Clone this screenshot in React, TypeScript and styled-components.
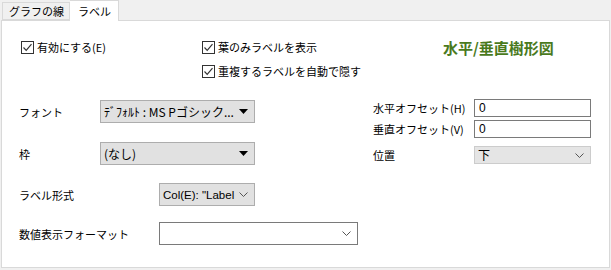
import React from 'react';
import styled, { createGlobalStyle } from 'styled-components';

const Global = createGlobalStyle`
  html, body { margin: 0; padding: 0; background: #f0f0f0; }
  body {
    font-family: "Noto Sans CJK JP", "Noto Sans", sans-serif;
    font-size: 11px;
    color: #000;
  }
`;

const Window = styled.div`
  width: 611px;
  height: 270px;
  display: flex;
  flex-direction: column;
  background: #f0f0f0;
`;

const TabStrip = styled.div`
  display: flex;
  align-items: flex-end;
  height: 20px;
  padding-left: 2px;
  position: relative;
  z-index: 1;
`;

const Tab = styled.div<{ $active?: boolean }>`
  box-sizing: border-box;
  height: ${p => (p.$active ? '21px' : '18px')};
  margin-bottom: ${p => (p.$active ? '-1px' : '0')};
  padding: ${p => (p.$active ? '0 7px 0 8px' : '0 5px 0 6px')};
  background: ${p => (p.$active ? '#fff' : '#f0f0f0')};
  border: 1px solid #d9d9d9;
  border-bottom: ${p => (p.$active ? 'none' : '1px solid #d9d9d9')};
  border-left: ${p => (p.$active ? 'none' : '1px solid #d9d9d9')};
  display: flex;
  align-items: center;
  font-size: 11px;
  line-height: 14px;
  white-space: nowrap;
`;

const Panel = styled.div`
  box-sizing: border-box;
  margin-left: 1px;
  width: 609px;
  height: 248px;
  background: #fff;
  border: 1px solid #d9d9d9;
  display: flex;
  flex-direction: column;
`;

const TopSection = styled.div`
  display: grid;
  grid-template-columns: 181px 241px auto;
  padding: 20px 0 0 19px;
`;

const CheckColumn = styled.div`
  display: flex;
  flex-direction: column;
  gap: 11px;
`;

const CheckRow = styled.label`
  display: flex;
  align-items: center;
  gap: 3px;
  height: 13px;
  line-height: 13px;
  white-space: nowrap;
`;

const Box = styled.span`
  box-sizing: border-box;
  width: 13px;
  height: 13px;
  border: 1px solid #333;
  background: #fff;
  display: flex;
  align-items: center;
  justify-content: center;
  flex: none;
`;

const Title = styled.div`
  font-size: 15px;
  font-weight: bold;
  color: #4a7a1d;
  line-height: 15px;
  margin-top: -1px;
  white-space: nowrap;
`;

const LowerSection = styled.div`
  display: flex;
  padding-left: 17px;
  margin-top: 21px;
`;

const LeftColumn = styled.div`
  width: 354px;
  display: flex;
  flex-direction: column;
`;

const RightColumn = styled.div`
  display: flex;
  flex-direction: column;
`;

const FieldRow = styled.div<{ $top: number }>`
  display: flex;
  align-items: center;
  margin-top: ${p => p.$top}px;
`;

const Label = styled.div<{ $w: number }>`
  width: ${p => p.$w}px;
  flex: none;
  white-space: nowrap;
  line-height: 14px;
`;

const Select = styled.div<{ $w: number; $h: number; $bg: string; $border: string }>`
  box-sizing: border-box;
  width: ${p => p.$w}px;
  height: ${p => p.$h}px;
  background: ${p => p.$bg};
  border: 1px solid ${p => p.$border};
  display: flex;
  align-items: center;
  justify-content: space-between;
  gap: 4px;
  padding: 0 6px 0 3px;
  white-space: nowrap;
  overflow: hidden;
`;

const SelectText = styled.span<{ $font?: string; $size?: number }>`
  font-family: ${p => p.$font || 'inherit'};
  font-size: ${p => p.$size || 11}px;
  line-height: 14px;
`;

const Input = styled.div`
  box-sizing: border-box;
  width: 117px;
  height: 18px;
  border: 1px solid #7a7a7a;
  background: #fff;
  display: flex;
  align-items: center;
  padding-left: 4px;
  font-family: "Liberation Sans Narrow", "Liberation Sans", sans-serif;
  font-size: 12px;
  line-height: 14px;
`;

const Check = () => (
  <Box>
    <svg width="11" height="11" viewBox="0 0 11 11">
      <polyline points="1.5,5.5 4.2,8.3 9.5,2.2" fill="none" stroke="#333" strokeWidth="1.2" />
    </svg>
  </Box>
);

const Triangle = () => (
  <svg width="9" height="5" viewBox="0 0 9 5">
    <polygon points="0,0 9,0 4.5,5" fill="#000" />
  </svg>
);

const Chevron = () => (
  <svg width="9" height="5" viewBox="0 0 9 5">
    <polyline points="0.5,0.5 4.5,4.5 8.5,0.5" fill="none" stroke="#555" strokeWidth="1" />
  </svg>
);

export default function App() {
  return (
    <Window>
      <Global />
      <TabStrip>
        <Tab>グラフの線</Tab>
        <Tab $active>ラベル</Tab>
      </TabStrip>
      <Panel>
        <TopSection>
          <CheckColumn>
            <CheckRow><Check />有効にする(E)</CheckRow>
          </CheckColumn>
          <CheckColumn>
            <CheckRow><Check />葉のみラベルを表示</CheckRow>
            <CheckRow><Check />重複するラベルを自動で隠す</CheckRow>
          </CheckColumn>
          <Title>水平/垂直樹形図</Title>
        </TopSection>
        <LowerSection>
          <LeftColumn>
            <FieldRow $top={1}>
              <Label $w={81}>フォント</Label>
              <Select $w={155} $h={23} $bg="#e1e1e1" $border="#adadad">
                <SelectText $size={12}>ﾃﾞﾌｫﾙﾄ : MS Pゴシック...</SelectText>
                <Triangle />
              </Select>
            </FieldRow>
            <FieldRow $top={19}>
              <Label $w={81}>枠</Label>
              <Select $w={155} $h={23} $bg="#e1e1e1" $border="#adadad">
                <SelectText $size={12}>(なし)</SelectText>
                <Triangle />
              </Select>
            </FieldRow>
            <FieldRow $top={18}>
              <Label $w={140}>ラベル形式</Label>
              <Select $w={96} $h={23} $bg="#e1e1e1" $border="#adadad">
                <SelectText $font={'"Liberation Sans", sans-serif'} $size={11.5}>Col(E): "Label</SelectText>
                <Chevron />
              </Select>
            </FieldRow>
            <FieldRow $top={16}>
              <Label $w={140}>数値表示フォーマット</Label>
              <Select $w={199} $h={23} $bg="#fff" $border="#7a7a7a">
                <SelectText />
                <Chevron />
              </Select>
            </FieldRow>
          </LeftColumn>
          <RightColumn>
            <FieldRow $top={0}>
              <Label $w={101}>水平オフセット(H)</Label>
              <Input>0</Input>
            </FieldRow>
            <FieldRow $top={3}>
              <Label $w={101}>垂直オフセット(V)</Label>
              <Input>0</Input>
            </FieldRow>
            <FieldRow $top={8}>
              <Label $w={101}>位置</Label>
              <Select $w={117} $h={18} $bg="#e5e5e5" $border="#cccccc">
                <SelectText $size={12}>下</SelectText>
                <Chevron />
              </Select>
            </FieldRow>
          </RightColumn>
        </LowerSection>
      </Panel>
    </Window>
  );
}
